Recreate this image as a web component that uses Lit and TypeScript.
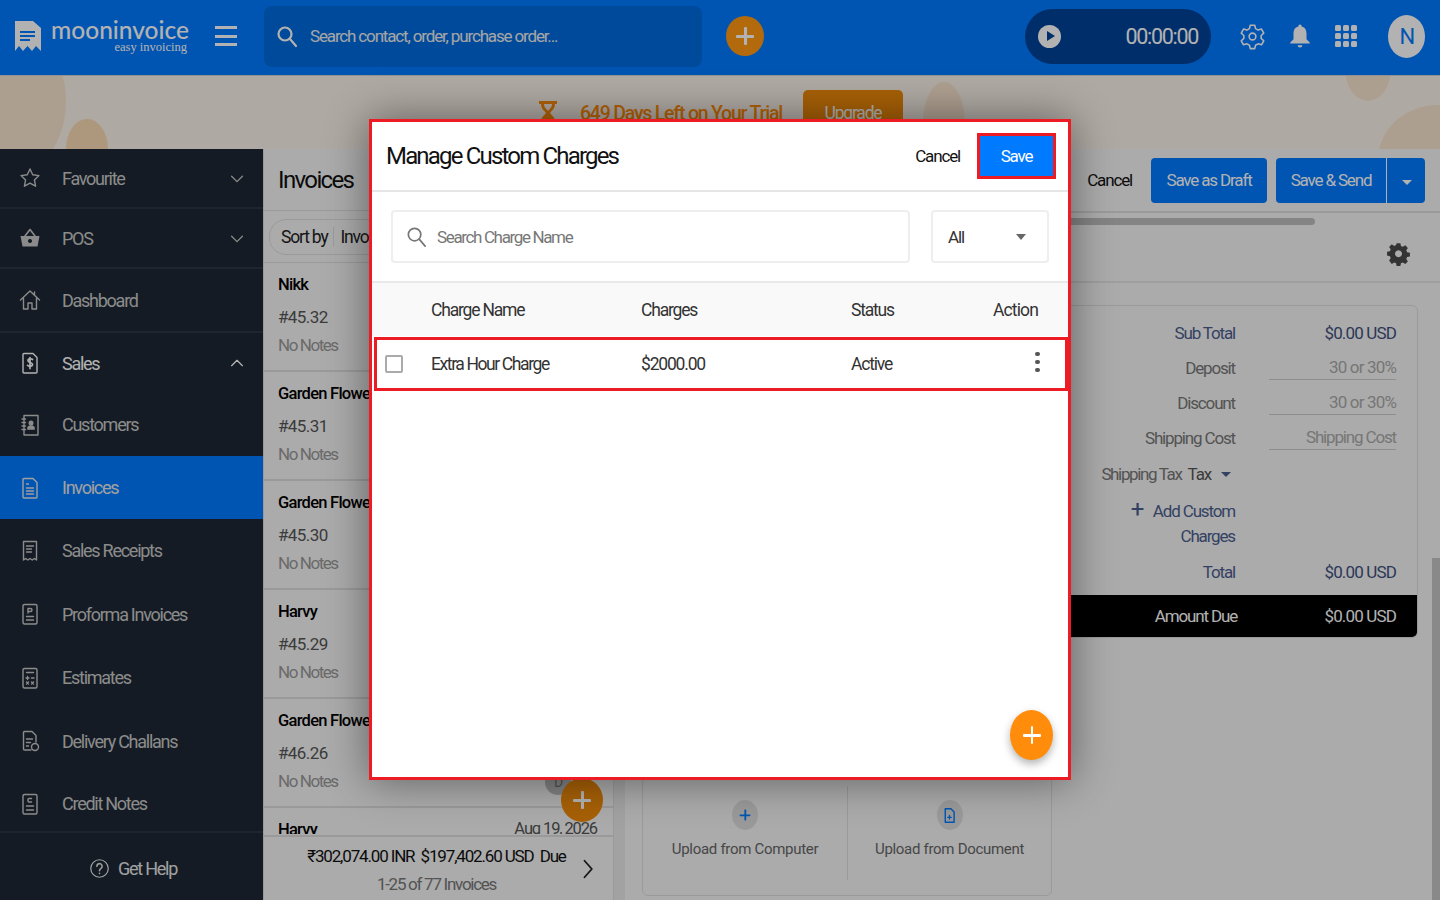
import { css, html, LitElement, svg } from "lit";
import { customElement } from "lit/decorators.js";

const ic = (body: unknown, size = 24, view = "0 0 24 24") =>
  html`<svg width=${size} height=${size} viewBox=${view} fill="none" stroke="currentColor" stroke-width="1.4" stroke-linecap="round" stroke-linejoin="round">${body}</svg>`;

const doc = svg`<path d="M6 2.500h9l4 4V21a1 1 0 0 1-1 1H6a1 1 0 0 1-1-1V3.500a1 1 0 0 1 1-1z"/>`;
const rect = svg`<rect x="5" y="2.500" width="14" height="19.500" rx="1.500"/>`;

const icons: Record<string, unknown> = {
  star: svg`<path d="M12 3l2.700 5.800 6.300.8-4.600 4.300 1.200 6.300L12 17.100 6.400 20.200l1.200-6.300L3 9.600l6.300-.8z"/>`,
  basket: svg`<path fill="currentColor" stroke="none" d="M2.500 10h19l-2 10.500h-15zM12 13a2 2 0 1 0 .01 0z"/><path d="M7 10l5-6.500 5 6.500" stroke-width="1.600"/><circle cx="12" cy="15" r="1.400" fill="#1e2834" stroke="none"/>`,
  home: svg`<path d="M2.500 12L12 3l9.500 9M5.500 10v11h4.500v-6h4v6h4.500V10M16.500 4v3"/>`,
  sales: svg`${doc}<path d="M14.500 8.500c-.6-1-4.500-1.300-4.500 1 0 2.500 4.500 1.500 4.500 4 0 2.200-4 2-5 .8M12 6.500v11" stroke-width="1.700"/>`,
  book: svg`<rect x="6" y="2.500" width="14" height="19.500"/><path d="M4 6h3.500M4 9.500h3.500M4 13h3.500M4 16.500h3.500"/><circle cx="13" cy="10" r="1.800" fill="currentColor"/><path d="M9.800 16c0-4 6.400-4 6.400 0z" fill="currentColor"/>`,
  invoice: svg`${doc}<path d="M8.500 8h2M8.500 12h7M8.500 15h7M8.500 18h7"/>`,
  receipt: svg`<path d="M5.500 2.500h13V21l-2.200-1.500-2.100 1.500-2.200-1.500-2.200 1.500-2.100-1.500L5.500 21z"/><path d="M8.500 7h7M8.500 10h5M8.500 13h5"/>`,
  proforma: svg`${rect}<path d="M10 11V6.500h2.500a1.200 1.200 0 0 1 0 3H10M8.500 14.500h7M8.500 18h7"/>`,
  estimate: svg`${rect}<path d="M8.500 6.500h7M8 12h3M9.500 10.500v3M13.500 12h2.500M8.500 16l2 2M10.500 16l-2 2M13.500 16l2 2M15.500 16l-2 2"/>`,
  delivery: svg`<path d="M13 21H6.500a1 1 0 0 1-1-1V3.500a1 1 0 0 1 1-1H14l4 4V13"/><path d="M8.500 10h6M8.500 13.500h4M8.500 17h2"/><circle cx="17" cy="18" r="3.500"/>`,
  credit: svg`${rect}<path d="M13.500 6.500h-2.500a1 1 0 0 0-1 1v1.500a1 1 0 0 0 1 1h2.500M8.500 14h7M8.500 18h7"/>`,
  help: svg`<circle cx="12" cy="12" r="10"/><path d="M9 9.500a3 3 0 1 1 4.700 2.400c-1.200.9-1.700 1.400-1.700 2.600M12 17.500v.1" stroke-width="1.800"/>`,
  search: svg`<circle cx="10" cy="10" r="6.500"/><path d="M15 15l6 7"/>`,
  gear: svg`<path d="M10 2h4l.7 3 2.300 1.300 3-.9 2 3.600-2.300 2.100v2.600l2.300 2.100-2 3.600-3-.9-2.300 1.300-.7 3h-4l-.7-3L7 18.500l-3 .9-2-3.600 2.300-2.100v-2.600L2 9l2-3.600 3 .9L9.300 5z"/><circle cx="12" cy="12" r="3"/>`,
  bell: svg`<path fill="currentColor" stroke="none" d="M12 1.500a1.500 1.500 0 0 1 1.500 1.700C17 4 18 7 18 10v5l3 3v1H3v-1l3-3v-5c0-3 1-6 4.500-6.800A1.500 1.500 0 0 1 12 1.500zM9.800 20.500h4.400a2.200 2.200 0 0 1-4.400 0z"/>`,
  cog: svg`<path fill="currentColor" stroke="none" fill-rule="evenodd" d="M10 1h4l.6 3 2 .9 2.600-1.700 2.800 2.800-1.700 2.600.9 2 3 .6v4l-3 .6-.9 2 1.700 2.600-2.800 2.800-2.600-1.700-2 .9-.6 3h-4l-.6-3-2-.9-2.600 1.700L2 19.400l1.700-2.600-.9-2-3-.6v-4l3-.6.9-2L2 5l2.800-2.800 2.600 1.700 2-.9zM12 8.500a3.700 3.700 0 1 0 .01 0z" transform="translate(1.200 1.200) scale(.9)"/>`,
  file: svg`<path d="M6 2.500h8l4.500 4.500v14.500H6z" stroke-width="2"/><path d="M9.500 14.500h5M12 12v5" stroke-width="1.800"/>`,
};

const nav = [
  { label: "Favourite", icon: "star", h: 60, line: true, arrow: "down" },
  { label: "POS", icon: "basket", h: 60, line: true, arrow: "down" },
  { label: "Dashboard", icon: "home", h: 64, line: true },
  { label: "Sales", icon: "sales", h: 60, arrow: "up", bright: true },
  { label: "Customers", icon: "book", h: 63 },
  { label: "Invoices", icon: "invoice", h: 63, active: true },
  { label: "Sales Receipts", icon: "receipt", h: 63 },
  { label: "Proforma Invoices", icon: "proforma", h: 64 },
  { label: "Estimates", icon: "estimate", h: 63 },
  { label: "Delivery Challans", icon: "delivery", h: 64 },
  { label: "Credit Notes", icon: "credit", h: 60, line: true },
];

const invoices = [
  { name: "Nikk", no: "#45.32" },
  { name: "Garden Flowers", no: "#45.31" },
  { name: "Garden Flowers", no: "#45.30" },
  { name: "Harvy", no: "#45.29" },
  { name: "Garden Flowers", no: "#46.26" },
];

@customElement("app-root")
class AppRoot extends LitElement {
  static styles = css`
    :host {
      display: block;
      position: relative;
      height: 100vh;
      overflow: hidden;
      background: #f5f5f5;
      font-family: Roboto, "Noto Sans", sans-serif;
      font-size: 17px;
      color: #222;
    }
    * { letter-spacing: -0.068em; }
    svg { display: block; flex: none; }
    .topbar {
      height: 76px;
      background: #007aff;
      display: flex;
      align-items: center;
      color: #fff;
      box-sizing: border-box;
      border-bottom: 1px solid #d0d0d0;
      padding-bottom: 3px;
    }
    .logo { margin-left: 14px; width: 28px; height: 34px; }
    .brand { margin-left: 8px; width: 139px; text-align: right; margin-top: -3px; }
    .brand b { display: block; font: 500 24.500px/25px Lato, sans-serif; letter-spacing: 0; }
    .brand span { display: block; font: 12.500px/11px "Liberation Serif", serif; margin-right: 2px; letter-spacing: 0; }
    .burger { margin-left: 26px; width: 22px; display: flex; flex-direction: column; gap: 5.500px; }
    .burger i { display: block; height: 3px; background: #fff; }
    .search {
      margin-left: 27px;
      width: 438px;
      height: 61px;
      border-radius: 8px;
      background: #006adf;
      display: flex;
      align-items: center;
      gap: 11px;
      padding-left: 11px;
      box-sizing: border-box;
      color: #eee;
    }
    .search svg { stroke-width: 2.2; color: #fff; }
    .add-top {
      margin-left: 24px;
      width: 38px;
      height: 40px;
      border-radius: 50%;
      background: #ff9812;
      display: grid;
      place-items: center;
    }
    .plus { position: relative; width: 18px; height: 18px; color: #fff; }
    .plus::before, .plus::after { content: ""; position: absolute; background: currentColor; border-radius: 1px; }
    .plus::before { left: 0; right: 0; top: 8px; height: 2.500px; }
    .plus::after { top: 0; bottom: 0; left: 8px; width: 2.500px; }
    .timer {
      margin-left: 261px;
      width: 186px;
      height: 55px;
      border-radius: 28px;
      background: #00439a;
      display: flex;
      align-items: center;
      justify-content: space-between;
      padding: 0 13px;
      box-sizing: border-box;
      font-size: 21.500px;
    }
    .timer span { letter-spacing: -0.06em; }
    .play { width: 23px; height: 23px; border-radius: 50%; background: #fff; display: grid; place-items: center; }
    .play i { border-left: 8px solid #00439a; border-top: 5.500px solid transparent; border-bottom: 5.500px solid transparent; margin-left: 2px; }
    .tools { margin-left: 28px; display: flex; align-items: center; gap: 21px; }
    .dots { display: grid; grid-template-columns: repeat(3, 6px); gap: 2px; width: 22px; margin-left: 1px; }
    .dots i { height: 6px; border-radius: 1.500px; background: #fff; }
    .avatar {
      margin-left: 31px;
      width: 37px;
      height: 43px;
      border-radius: 50%;
      background: #fff;
      color: #007aff;
      display: grid;
      place-items: center;
      font-size: 22px;
    }

    .banner {
      height: 73px;
      background: #fbf3ea;
      position: relative;
      overflow: hidden;
      color: #ff8c0a;
      display: flex;
      padding: 14px 0 0 539px;
      box-sizing: border-box;
    }
    .blob { position: absolute; background: #f8e4cf; border-radius: 50%; }
    .blob.deep { background: #f8d9b3; }
    .trial { display: flex; align-items: center; gap: 23px; height: 46px; width: 264px; font-size: 19.500px; font-weight: 500; }
    .trial span { letter-spacing: -0.062em; }
    .upgrade { background: #f08a0a; color: #fff; border-radius: 5px; width: 100px; height: 60px; box-sizing: border-box; font-size: 17.500px; line-height: 46px; text-align: center; }

    .body { display: flex; height: 751px; }
    .side { width: 263px; background: #1e2834; color: #d5d5d5; display: flex; flex-direction: column; flex: none; border-right: 1px solid #ddd; box-sizing: content-box; }
    .nav-item {
      display: flex;
      align-items: center;
      padding: 0 17px 0 18px;
      gap: 20px;
      font-size: 18px;
      box-sizing: border-box;
      color: #c8c8c8;
    }
    .nav-item .lbl { letter-spacing: -0.07em; flex: 1; }
    .nav-item.line { border-bottom: 2px solid #2b3541; }
    .nav-item:nth-child(11) { padding-top: 3px; }
    .nav-item.bright { color: #fff; }
    .nav-item.active { background: #007aff; color: #e6e6e6; }
    .help { flex: 1; display: flex; align-items: center; justify-content: center; gap: 8px; font-size: 18px; color: #e6e6e6; padding: 4px 0 0 3px; }

    .list { width: 349px; flex: none; display: flex; flex-direction: column; position: relative; }
    .list-title { height: 62px; display: flex; align-items: center; padding-left: 14px; font-size: 24px; border-bottom: 1px solid #ddd; box-sizing: border-box; color: #111; }
    .sort-row { height: 52px; display: flex; align-items: center; padding-left: 5px; border-bottom: 1px solid #ddd; box-sizing: border-box; }
    .sort { display: flex; align-items: center; height: 34px; border: 1px solid #ddd; border-radius: 17px; padding: 0 60px 0 11px; font-size: 17.500px; white-space: nowrap; }
    .sort span:last-child { border-left: 1px solid #ddd; margin-left: 6px; padding-left: 6px; }
    .rows { flex: 1; overflow: hidden; min-height: 0; }
    .inv { height: 109px; padding: 11px 14px 0; box-sizing: border-box; border-bottom: 2px solid #ddd; }
    .inv b { display: block; font-size: 16.500px; font-weight: 500; line-height: 22px; color: #000; white-space: nowrap; letter-spacing: -0.045em; }
    .inv .no { font-size: 17px; line-height: 22px; margin-top: 10px; color: #555; letter-spacing: -0.035em; }
    .inv .nt { font-size: 17px; line-height: 22px; margin-top: 6px; color: #999; letter-spacing: -0.085em; }
    .inv.cut { display: flex; justify-content: space-between; height: 26px; overflow: hidden; border: 0; padding-right: 16px; }
    .inv.cut span { font-size: 16.500px; color: #555; }
    .totals { height: 65px; border-top: 2px solid #ddd; display: flex; align-items: center; box-sizing: border-box; background: #f5f5f5; padding: 0 12px 0 0; }
    .totals div { flex: 1; text-align: center; font-size: 17px; line-height: 28px; color: #111; padding-top: 3px; margin-left: 30px; white-space: nowrap; }
    .totals small { display: block; font-size: 17px; color: #777; letter-spacing: -0.075em; }
    .list-fab {
      position: absolute;
      left: 297px;
      top: 629px;
      width: 42px;
      height: 44px;
      border-radius: 50%;
      background: #f08a0a;
      display: grid;
      place-items: center;
    }
    .badge { position: absolute; left: 281px; top: 620px; width: 26px; height: 26px; border-radius: 50%; background: #bbb; color: #777; font-size: 14px; text-align: center; line-height: 26px; }

    .gap { width: 12px; flex: none; background: #e8e8e8; border-left: 1px solid #ddd; box-sizing: border-box; }
    .detail { flex: 1; display: flex; flex-direction: column; min-width: 0; }
    .actions { height: 62px; display: flex; align-items: center; justify-content: flex-end; padding-right: 15px; gap: 9px; flex: none; }
    .actions .cancel { margin-right: 10px; color: #111; }
    .btn { height: 45px; background: #007aff; color: #fff; border-radius: 4px; display: flex; align-items: center; justify-content: center; white-space: nowrap; }
    .draft { width: 116px; }
    .send { width: 149px; justify-content: flex-start; }
    .send span { width: 110px; text-align: center; border-right: 1px solid #fff; line-height: 45px; }
    .send i { margin-left: 15px; border-top: 5px solid #fff; border-left: 5px solid transparent; border-right: 5px solid transparent; margin-top: 4px; }
    .strip { height: 14px; border-top: 2px solid #ddd; display: flex; flex-direction: column; justify-content: flex-end; align-items: flex-start; padding-left: 430px; box-sizing: border-box; flex: none; }
    .strip i { display: block; width: 260px; height: 7px; background: #bdbdbd; border-radius: 0 4px 4px 0; }
    .gear-row { height: 58px; display: flex; justify-content: flex-end; align-items: center; padding: 0 29px 0 0; border-bottom: 2px solid #e3e3e3; box-sizing: border-box; color: #4a4a4a; flex: none; }
    .content { flex: 1; display: grid; grid-template-columns: 410px 1fr; grid-template-rows: auto 1fr; column-gap: 8px; padding: 22px 22px 0 17px; min-height: 0; }
    .sum { grid-column: 2; border: 1px solid #ddd; border-radius: 6px; height: 333px; box-sizing: border-box; display: flex; flex-direction: column; overflow: hidden; }
    .sum-row { display: grid; grid-template-columns: 174px 161px; justify-content: start; align-items: center; height: 35px; text-align: right; color: #777; }
    .sum-row:first-child { margin-top: 9px; }
    .sum-row .v { text-align: right; letter-spacing: -0.05em; }
    .sum-row.strong { color: #4b5e8e; }
    .sum-row.strong .v { color: #3e517f; }
    .sum-row .in { color: #aaa; border-bottom: 1px solid #ccc; margin-left: 34px; line-height: 24px; }
    .sum-row .in.wide { letter-spacing: -0.068em; }
    .tax { display: flex; justify-content: flex-end; align-items: center; gap: 6px; white-space: nowrap; height: 38px; width: 170px; color: #777; }
    .tax span { letter-spacing: -0.08em; }
    .tax b { font-weight: 400; color: #555; }
    .tax i { border-top: 5px solid #4b5e8e; border-left: 5px solid transparent; border-right: 5px solid transparent; margin-left: 4px; }
    .custom { width: 174px; text-align: right; color: #4b5e8e; line-height: 25px; height: 50px; margin: 6px 0 0 0; }
    .custom em { font-style: normal; font-size: 24px; margin-right: 10px; line-height: 20px; font-weight: 400; }
    .due { margin-top: auto; height: 42px; background: #000; color: #fff; display: grid; grid-template-columns: 174px 161px; align-items: center; text-align: right; }
    .due span:first-child { margin-right: -2px; }
    .due span:last-child { letter-spacing: -0.05em; }
    .upload { grid-column: 1; grid-row: 1 / 3; align-self: end; height: 117px; margin-bottom: 4px; border: 1px solid #ddd; border-radius: 6px; display: grid; grid-template-columns: 1fr 1fr; font-size: 15px; color: #666; }
    .up { display: flex; flex-direction: column; align-items: center; gap: 10px; padding-top: 22px; text-align: center; }
    .up span { letter-spacing: -0.02em; }
    .up + .up { border-left: 1px solid #ddd; height: 80px; margin-top: 8px; padding-top: 14px; }
    .circle { width: 26px; height: 30px; border-radius: 50%; background: #ddd; display: grid; place-items: center; color: #007aff; }
    .circle .plus { color: #007aff; transform: scale(0.6); }
    .vbar { position: absolute; right: 0; top: 558px; bottom: 0; width: 8px; background: #c4c4c4; }

    .veil { position: absolute; inset: 0; background: rgba(0, 0, 0, 0.3); }
    .modal {
      position: absolute;
      left: 369px;
      top: 119px;
      width: 702px;
      height: 661px;
      box-sizing: border-box;
      border: 3px solid #ed1c24;
      background: #fff;
      box-shadow: 0 0 40px rgba(0, 0, 0, 0.45);
      display: flex;
      flex-direction: column;
      color: #222;
    }
    .m-head { height: 70px; border-bottom: 2px solid #e6e6e6; display: flex; align-items: center; padding: 0 14px; box-sizing: border-box; flex: none; }
    .m-head h2 { margin: 0; flex: 1; font-size: 24px; font-weight: 400; color: #111; letter-spacing: -0.076em; }
    .m-head span { color: #111; margin-right: 20px; }
    .save { width: 73px; height: 40px; background: #007aff; color: #fff; display: grid; place-items: center; outline: 3px solid #ed1c24; margin-right: 1px; }
    .filters { height: 91px; display: flex; align-items: center; padding: 0 19px; gap: 21px; border-bottom: 2px solid #e9e9e9; box-sizing: border-box; flex: none; }
    .field { height: 53px; border: 2px solid #eee; border-radius: 4px; display: flex; align-items: center; box-sizing: border-box; }
    .field.s { width: 519px; padding-left: 12px; gap: 9px; color: #777; }
    .field.s span { letter-spacing: -0.08em; }
    .field.s svg { color: #777; stroke-width: 1.8; }
    .field.a { width: 118px; padding: 0 21px 0 15px; justify-content: space-between; color: #333; }
    .field.a i { border-top: 6px solid #666; border-left: 5.500px solid transparent; border-right: 5.500px solid transparent; }
    .t-head, .t-row { display: grid; align-items: center; font-size: 17.500px; }
    .t-head { height: 53px; background: #f9f9f9; color: #333; flex: none; grid-template-columns: 59px 210px 210px 1fr 76px; }
    .t-head > :last-child { margin-left: 1px; letter-spacing: -0.05em; }
    .t-row { height: 54px; box-sizing: border-box; border: 3px solid #ed1c24; margin-left: 2px; grid-template-columns: 54px 210px 210px 1fr 76px; flex: none; color: #333; margin-top: 1px; }
    .t-row span:nth-child(2) { letter-spacing: -0.08em; }
    .check { width: 18px; height: 18px; border: 2px solid #aaa; border-radius: 2px; box-sizing: border-box; margin-left: 8px; }
    .kebab { display: flex; flex-direction: column; gap: 3.500px; margin-left: 46px; margin-top: -4px; }
    .kebab i { width: 4.500px; height: 4.500px; border-radius: 50%; background: #555; }
    .m-fab {
      position: absolute;
      right: 15px;
      bottom: 17px;
      width: 43px;
      height: 50px;
      border-radius: 50%;
      background: #ff8c0a;
      display: grid;
      place-items: center;
      box-shadow: 0 4px 8px rgba(0, 0, 0, 0.3);
    }
  `;

  render() {
    return html`
      ${this.renderTop()}
      ${this.renderBanner()}
      <div class="body">
        ${this.renderSide()}
        ${this.renderList()}
        <div class="gap"></div>
        ${this.renderDetail()}
      </div>
      <div class="vbar"></div>
      <div class="veil"></div>
      ${this.renderModal()}
    `;
  }

  renderTop() {
    return html`<div class="topbar">
      <svg class="logo" viewBox="0 0 28 34">
        <path fill="#fff" d="M1 2h18l8 7v23l-5-5-4 5-4.500-5-4.500 5-4-5-4 5z"/>
        <path stroke="#007aff" stroke-width="2" d="M6 13h15M6 17h15M6 21h10"/>
      </svg>
      <div class="brand"><b>mooninvoice</b><span>easy invoicing</span></div>
      <div class="burger"><i></i><i></i><i></i></div>
      <div class="search">${ic(icons.search, 24)}<span>Search contact, order, purchase order...</span></div>
      <div class="add-top"><div class="plus"></div></div>
      <div class="timer"><div class="play"><i></i></div><span>00:00:00</span></div>
      <div class="tools">
        ${ic(icons.gear, 27)}
        ${ic(icons.bell, 26)}
        <div class="dots">${[1, 2, 3, 4, 5, 6, 7, 8, 9].map(() => html`<i></i>`)}</div>
      </div>
      <div class="avatar">N</div>
    </div>`;
  }

  renderBanner() {
    return html`<div class="banner">
      <div class="blob" style="left:-46px;top:-50px;width:112px;height:150px"></div>
      <div class="blob deep" style="left:66px;top:43px;width:42px;height:60px"></div>
      <div class="blob" style="left:923px;top:6px;width:42px;height:80px"></div>
      <div class="blob" style="left:1345px;top:-40px;width:46px;height:65px"></div>
      <div class="blob" style="left:1378px;top:29px;width:120px;height:110px"></div>
      <div class="trial">
        <svg width="18" height="24" viewBox="0 0 18 24" fill="currentColor"><path d="M0 0h18v3h-2c0 5-3 6-5 9 2 3 5 4 5 9h2v3H0v-3h2c0-5 3-6 5-9-2-3-5-4-5-9H0zM5 3c0 4 3 5 4 7 1-2 4-3 4-7z"/></svg>
        <span>649 Days Left on Your Trial</span>
      </div>
      <div class="upgrade">Upgrade</div>
    </div>`;
  }

  renderSide() {
    return html`<div class="side">
      ${nav.map(
        (n) => html`<div
          class="nav-item ${n.line ? "line" : ""} ${n.active ? "active" : ""} ${n.bright ? "bright" : ""}"
          style="height:${n.h}px"
        >
          ${ic(icons[n.icon])}
          <span class="lbl">${n.label}</span>
          ${n.arrow
            ? ic(svg`<path d=${n.arrow === "down" ? "M3 8l6 6 6-6" : "M3 13l6-6 6 6"}/>`, 18, "0 0 18 20")
            : ""}
        </div>`
      )}
      <div class="help">${ic(icons.help, 21)}<span>Get Help</span></div>
    </div>`;
  }

  renderList() {
    return html`<div class="list">
      <div class="list-title">Invoices</div>
      <div class="sort-row"><div class="sort"><span>Sort by</span><span>Invoice Date</span></div></div>
      <div class="rows">
        ${invoices.map(
          (i) => html`<div class="inv"><b>${i.name}</b><div class="no">${i.no}</div><div class="nt">No Notes</div></div>`
        )}
        <div class="inv cut"><b>Harvy</b><span>Aug 19, 2026</span></div>
      </div>
      <div class="totals">
        <div>₹302,074.00 INR &nbsp;$197,402.60 USD &nbsp;Due<small>1-25 of 77 Invoices</small></div>
        ${ic(svg`<path d="M6 3l8 9-8 9" stroke-width="2"/>`, 22)}
      </div>
      <div class="badge">D</div>
      <div class="list-fab"><div class="plus"></div></div>
    </div>`;
  }

  renderDetail() {
    return html`<div class="detail">
      <div class="actions">
        <span class="cancel">Cancel</span>
        <div class="btn draft">Save as Draft</div>
        <div class="btn send"><span>Save &amp; Send</span><i></i></div>
      </div>
      <div class="strip"><i></i></div>
      <div class="gear-row">${ic(icons.cog, 25)}</div>
      <div class="content">
        <div class="upload">
          <div class="up"><div class="circle"><div class="plus"></div></div><span>Upload from Computer</span></div>
          <div class="up"><div class="circle">${ic(icons.file, 17)}</div><span>Upload from Document</span></div>
        </div>
        <div class="sum">
          <div class="sum-row strong"><span>Sub Total</span><span class="v">$0.00 USD</span></div>
          <div class="sum-row"><span>Deposit</span><span class="v in">30 or 30%</span></div>
          <div class="sum-row"><span>Discount</span><span class="v in">30 or 30%</span></div>
          <div class="sum-row"><span>Shipping Cost</span><span class="v in wide">Shipping Cost</span></div>
          <div class="tax"><span>Shipping Tax</span><b>Tax</b><i></i></div>
          <div class="custom"><em>+</em>Add Custom<br />Charges</div>
          <div class="sum-row strong" style="margin-top:5px"><span>Total</span><span class="v">$0.00 USD</span></div>
          <div class="due"><span>Amount Due</span><span>$0.00 USD</span></div>
        </div>
      </div>
    </div>`;
  }

  renderModal() {
    return html`<div class="modal">
      <div class="m-head">
        <h2>Manage Custom Charges</h2>
        <span>Cancel</span>
        <div class="save">Save</div>
      </div>
      <div class="filters">
        <div class="field s">${ic(icons.search, 23)}<span>Search Charge Name</span></div>
        <div class="field a"><span>All</span><i></i></div>
      </div>
      <div class="t-head"><span></span><span>Charge Name</span><span>Charges</span><span>Status</span><span>Action</span></div>
      <div class="t-row">
        <div class="check"></div>
        <span>Extra Hour Charge</span>
        <span>$2000.00</span>
        <span>Active</span>
        <div class="kebab"><i></i><i></i><i></i></div>
      </div>
      <div class="m-fab"><div class="plus"></div></div>
    </div>`;
  }
}
